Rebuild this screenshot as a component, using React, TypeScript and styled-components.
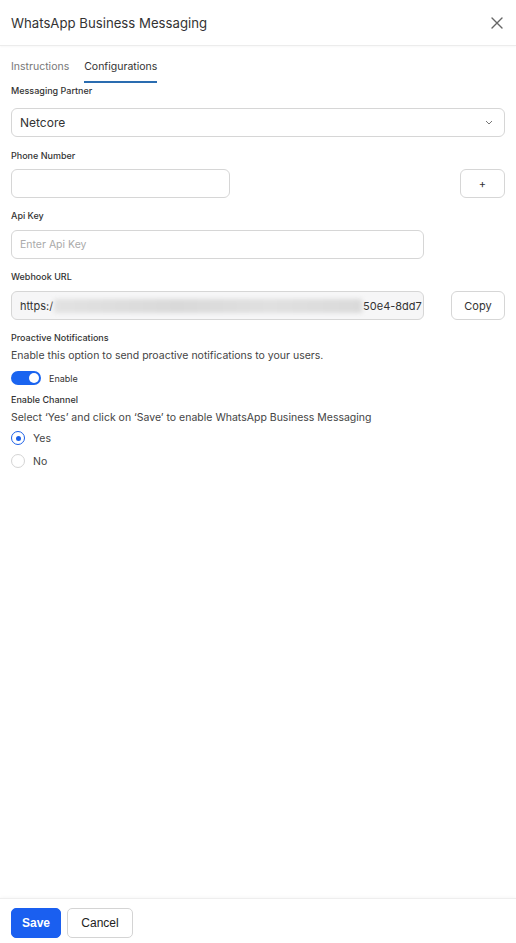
import React, { useState } from "react";
import styled, { createGlobalStyle, css } from "styled-components";

const GlobalStyle = createGlobalStyle`
  html, body {
    margin: 0;
    padding: 0;
    background: #fff;
  }
  body {
    font-family: Inter, "Noto Sans", "Liberation Sans", sans-serif;
    color: #333;
  }
  * {
    box-sizing: border-box;
  }
`;

const Drawer = styled.div`
  display: flex;
  flex-direction: column;
  min-height: 100vh;
  background: #fff;
`;

const Header = styled.div`
  height: 46px;
  display: flex;
  align-items: center;
  justify-content: space-between;
  padding: 0 11px;
  border-bottom: 1px solid #ececec;
  box-shadow: 0 1px 2px rgba(0, 0, 0, 0.03);
`;

const Title = styled.h1`
  margin: 0;
  font-size: 13.2px;
  font-weight: 400;
  color: #333;
`;

const CloseButton = styled.button`
  border: none;
  background: none;
  padding: 0;
  width: 16px;
  height: 16px;
  display: flex;
  align-items: center;
  justify-content: center;
  cursor: pointer;
`;

const Body = styled.div`
  flex: 1;
  padding: 0 11px;
`;

const Tabs = styled.div`
  display: flex;
  gap: 15px;
  padding-top: 13px;
`;

const Tab = styled.div<{ $active?: boolean }>`
  font-size: 10.5px;
  line-height: 16px;
  padding-bottom: 6px;
  border-bottom: 2px solid transparent;
  color: ${(p) => (p.$active ? "#333" : "#777")};
  cursor: pointer;
  ${(p) =>
    p.$active &&
    css`
      border-bottom-color: #2a6cb0;
    `}
`;

const Field = styled.div<{ $gap?: number; $top?: number }>`
  display: flex;
  flex-direction: column;
  gap: ${(p) => p.$gap ?? 8}px;
  margin-top: ${(p) => p.$top ?? 12}px;
`;

const Label = styled.div`
  font-size: 9px;
  line-height: 12px;
  font-weight: 500;
  color: #333;
`;

const Row = styled.div`
  display: flex;
  align-items: center;
  justify-content: space-between;
`;

const boxBase = css`
  height: 29px;
  border: 1px solid #d6d6d6;
  border-radius: 6px;
  background: #fff;
  font-family: inherit;
  font-size: 12px;
  color: #333;
  outline: none;
`;

const Select = styled.div`
  ${boxBase};
  width: 100%;
  display: flex;
  align-items: center;
  justify-content: space-between;
  padding: 0 11px 0 8px;
  cursor: pointer;
`;

const Input = styled.input<{ $width: number }>`
  ${boxBase};
  width: ${(p) => p.$width}px;
  padding: 0 8px;
  font-size: 10.5px;
  &::placeholder {
    color: #aaa;
  }
`;

const ReadOnlyBox = styled.div`
  ${boxBase};
  width: 413px;
  background: #f6f6f7;
  display: flex;
  align-items: center;
  padding: 0 8px;
  overflow: hidden;
  white-space: nowrap;
  font-size: 11px;
`;

const Masked = styled.span`
  display: inline-block;
  width: 308px;
  height: 14px;
  margin: 0 1px;
  background: linear-gradient(90deg, #e2e2e2, #d9d9d9 40%, #e0e0e0 70%, #dadada);
  filter: blur(2px);
  flex-shrink: 0;
`;

const GhostButton = styled.button<{ $width: number }>`
  ${boxBase};
  width: ${(p) => p.$width}px;
  font-size: 11px;
  cursor: pointer;
  display: flex;
  align-items: center;
  justify-content: center;
`;

const Section = styled.div<{ $top?: number }>`
  margin-top: ${(p) => p.$top ?? 12}px;
`;

const Hint = styled.div`
  font-size: 10.5px;
  line-height: 15px;
  color: #444;
  margin-top: 4px;
`;

const ToggleRow = styled.label`
  display: flex;
  align-items: center;
  gap: 8px;
  margin-top: 8px;
  font-size: 9px;
  color: #333;
  cursor: pointer;
`;

const Track = styled.span<{ $on: boolean }>`
  width: 30px;
  height: 14px;
  border-radius: 7px;
  background: ${(p) => (p.$on ? "#1a64f0" : "#ccc")};
  display: flex;
  align-items: center;
  padding: 2px;
  justify-content: ${(p) => (p.$on ? "flex-end" : "flex-start")};
`;

const Knob = styled.span`
  width: 10px;
  height: 10px;
  border-radius: 50%;
  background: #fff;
`;

const RadioGroup = styled.div`
  display: flex;
  flex-direction: column;
  gap: 9px;
  margin-top: 6px;
`;

const RadioOption = styled.label`
  display: flex;
  align-items: center;
  gap: 8px;
  font-size: 10.5px;
  color: #444;
  cursor: pointer;
`;

const RadioDot = styled.span<{ $checked: boolean }>`
  width: 14px;
  height: 14px;
  border-radius: 50%;
  border: ${(p) => (p.$checked ? "1.5px solid #1a5fe8" : "1px solid #d4d4d4")};
  display: flex;
  align-items: center;
  justify-content: center;
  &::after {
    content: "";
    width: 5px;
    height: 5px;
    border-radius: 50%;
    background: ${(p) => (p.$checked ? "#1a5fe8" : "transparent")};
  }
`;

const Footer = styled.div`
  display: flex;
  gap: 6px;
  padding: 9px 11px 5px;
  border-top: 1px solid #eee;
  box-shadow: 0 -1px 3px rgba(0, 0, 0, 0.03);
`;

const Button = styled.button<{ $primary?: boolean }>`
  height: 30px;
  border-radius: 5px;
  font-family: "Liberation Sans", Arial, sans-serif;
  font-size: 12px;
  cursor: pointer;
  ${(p) =>
    p.$primary
      ? css`
          width: 50px;
          background: #1a5ff0;
          border: 1px solid #1a5ff0;
          color: #fff;
          font-weight: 700;
        `
      : css`
          width: 66px;
          background: #fff;
          border: 1px solid #d4d4d4;
          color: #222;
        `}
`;

const App: React.FC = () => {
  const [tab, setTab] = useState("config");
  const [proactive, setProactive] = useState(true);
  const [enabled, setEnabled] = useState("yes");

  return (
    <Drawer>
      <GlobalStyle />
      <Header>
        <Title>WhatsApp Business Messaging</Title>
        <CloseButton aria-label="Close">
          <svg width="12" height="12" viewBox="0 0 12 12">
            <path
              d="M1 1 L11 11 M11 1 L1 11"
              stroke="#666"
              strokeWidth="1.4"
              strokeLinecap="round"
            />
          </svg>
        </CloseButton>
      </Header>

      <Body>
        <Tabs>
          <Tab $active={tab === "instr"} onClick={() => setTab("instr")}>
            Instructions
          </Tab>
          <Tab $active={tab === "config"} onClick={() => setTab("config")}>
            Configurations
          </Tab>
        </Tabs>

        <Field $gap={11} $top={2}>
          <Label>Messaging Partner</Label>
          <Select>
            <span>Netcore</span>
            <svg width="8" height="5" viewBox="0 0 8 5">
              <path
                d="M1 1 L4 4 L7 1"
                fill="none"
                stroke="#777"
                strokeWidth="1"
              />
            </svg>
          </Select>
        </Field>

        <Field $gap={7} $top={13}>
          <Label>Phone Number</Label>
          <Row>
            <Input $width={219} />
            <GhostButton $width={45}>+</GhostButton>
          </Row>
        </Field>

        <Field>
          <Label>Api Key</Label>
          <Input $width={413} placeholder="Enter Api Key" />
        </Field>

        <Field>
          <Label>Webhook URL</Label>
          <Row>
            <ReadOnlyBox>
              https:/
              <Masked />
              50e4-8dd7
            </ReadOnlyBox>
            <GhostButton $width={54}>Copy</GhostButton>
          </Row>
        </Field>

        <Section>
          <Label>Proactive Notifications</Label>
          <Hint>Enable this option to send proactive notifications to your users.</Hint>
          <ToggleRow onClick={() => setProactive((v) => !v)}>
            <Track $on={proactive}>
              <Knob />
            </Track>
            Enable
          </ToggleRow>
        </Section>

        <Section $top={9}>
          <Label>Enable Channel</Label>
          <Hint>Select ‘Yes’ and click on ‘Save’ to enable WhatsApp Business Messaging</Hint>
          <RadioGroup>
            <RadioOption onClick={() => setEnabled("yes")}>
              <RadioDot $checked={enabled === "yes"} />
              Yes
            </RadioOption>
            <RadioOption onClick={() => setEnabled("no")}>
              <RadioDot $checked={enabled === "no"} />
              No
            </RadioOption>
          </RadioGroup>
        </Section>
      </Body>

      <Footer>
        <Button $primary>Save</Button>
        <Button>Cancel</Button>
      </Footer>
    </Drawer>
  );
};

export default App;
